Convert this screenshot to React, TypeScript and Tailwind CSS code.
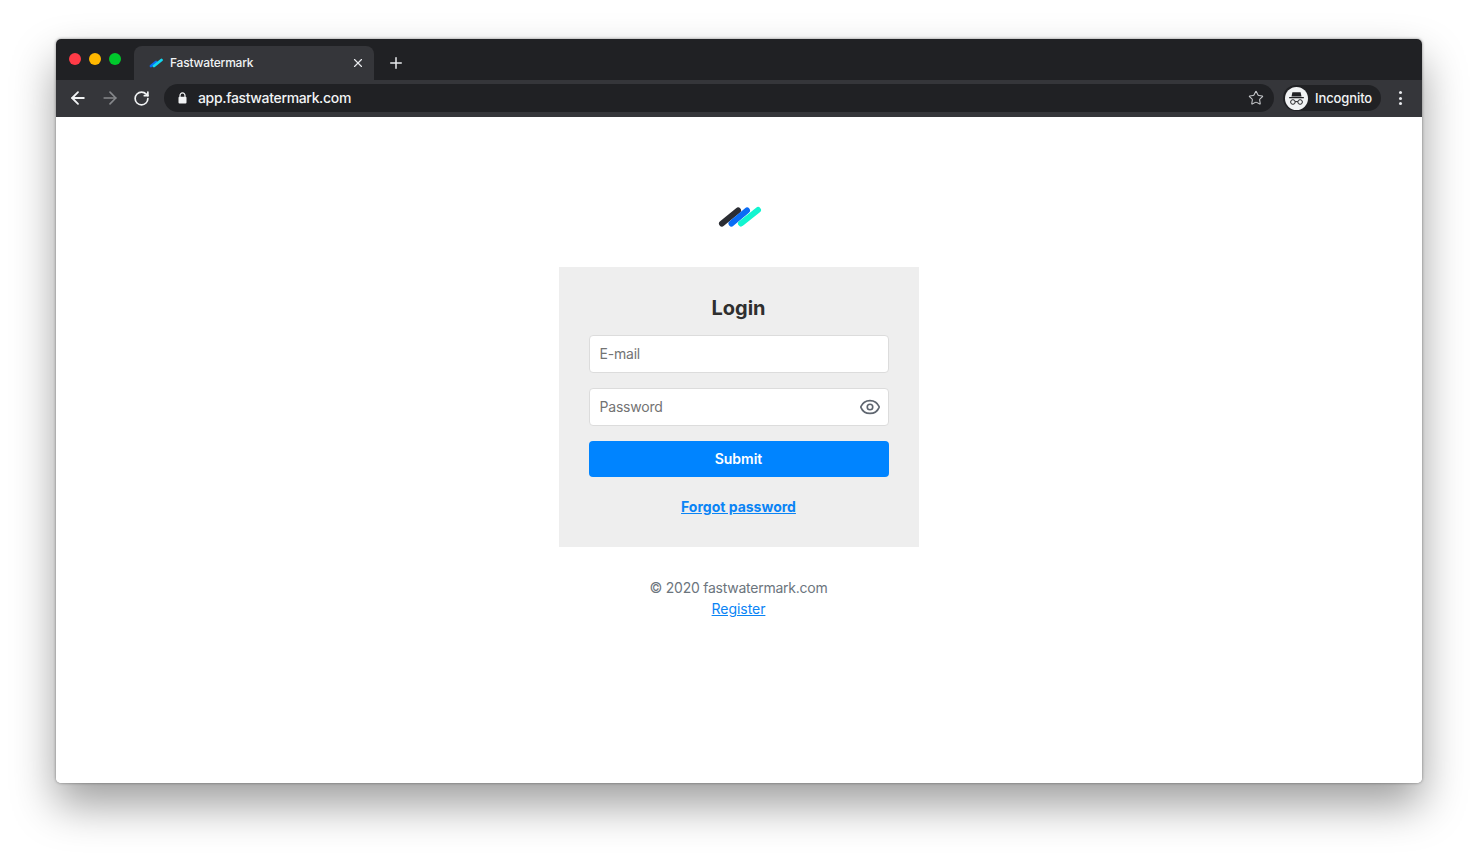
import { ArrowLeft, ArrowRight, Eye, Plus, RotateCw, Star, X } from 'lucide-react';

function Logo() {
  return (
    <svg width="44" height="22" viewBox="0 0 44 22" fill="none" strokeLinecap="round" strokeWidth="6" className="ml-[3px]">
      <path d="M4 17.5 L20 4.5" stroke="#2b2d33" />
      <path d="M13.5 17.5 L29 4.5" stroke="#0a6cf5" />
      <path d="M23 17.5 L40 4" stroke="#12f5d0" />
    </svg>
  );
}

function Favicon() {
  return (
    <svg width="14" height="10" viewBox="0 0 14 10" fill="none" strokeLinecap="round" strokeWidth="2.8">
      <path d="M2 8 L7 4" stroke="#0a6cf5" />
      <path d="M5 8 L12.5 2" stroke="#12d8f0" />
    </svg>
  );
}

function IncognitoBadge() {
  return (
    <div className="flex h-[23px] w-[23px] items-center justify-center rounded-full bg-[#f1f3f4]">
      <svg width="17" height="15" viewBox="0 0 17 15" fill="none">
        <path d="M4.4 1.2 H12.6 L13.5 5.4 H3.5 Z" fill="#202124" />
        <rect x="1" y="6" width="15" height="1.3" rx="0.65" fill="#202124" />
        <circle cx="4.9" cy="11" r="2.3" stroke="#202124" strokeWidth="1" />
        <circle cx="12.1" cy="11" r="2.3" stroke="#202124" strokeWidth="1" />
        <path d="M7.2 10.6 H9.8" stroke="#202124" strokeWidth="1" />
      </svg>
    </div>
  );
}

function TabStrip() {
  return (
    <div className="flex h-[41px] bg-[#202124]">
      <div className="flex w-[78px] items-start gap-2 pl-[13px] pt-[14px]">
        <span className="h-3 w-3 rounded-full bg-[#ff3b47]" />
        <span className="h-3 w-3 rounded-full bg-[#ffb800]" />
        <span className="h-3 w-3 rounded-full bg-[#00c92c]" />
      </div>
      <div className="mt-[7px] flex h-[34px] w-[240px] items-center rounded-t-lg bg-[#35363a] pl-[15px] pr-[9px]">
        <Favicon />
        <span className="ml-[7px] flex-1 text-[12px] font-medium tracking-[-0.2px] text-[#f1f3f4]">Fastwatermark</span>
        <X size={14} strokeWidth={2} className="text-[#e8eaed]" />
      </div>
      <div className="ml-[13px] mt-[15px]">
        <Plus size={18} strokeWidth={2} className="text-[#e8eaed]" />
      </div>
    </div>
  );
}

function Toolbar() {
  return (
    <div className="flex h-[37px] items-center bg-[#35363a] pb-[1px] pl-[12px]">
      <ArrowLeft size={20} strokeWidth={2.2} className="text-[#f1f3f4]" />
      <ArrowRight size={20} strokeWidth={2} className="ml-[12px] text-[#86888b]" />
      <RotateCw size={17} strokeWidth={2.4} className="ml-[13px] text-[#f1f3f4]" />
      <div className="ml-[14px] flex h-[28px] w-[1110px] items-center rounded-full bg-[#202124] pl-[14px] pr-[10px]">
        <svg width="9" height="12" viewBox="0 0 9 12" fill="none">
          <path d="M2 5 V3.4 a2.5 2.5 0 0 1 5 0 V5" stroke="#f1f3f4" strokeWidth="1.2" />
          <rect x="0.5" y="4.8" width="8" height="6.7" rx="1" fill="#f1f3f4" />
        </svg>
        <span className="ml-[11px] flex-1 pb-[1px] text-[14px] font-medium tracking-[-0.34px] text-[#f1f3f4]">app.fastwatermark.com</span>
        <Star size={16} strokeWidth={1.6} className="text-[#c4c6c9]" />
      </div>
      <div className="ml-[9px] flex h-[26px] w-[98px] items-center rounded-full bg-[#202124] pl-[2px]">
        <IncognitoBadge />
        <span className="ml-[7px] pt-[2px] text-[13px] font-medium tracking-[-0.1px] text-[#f1f3f4]">Incognito</span>
      </div>
      <div className="ml-[18px] flex flex-col gap-[2.5px]">
        <span className="h-[3px] w-[3px] rounded-full bg-[#e8eaed]" />
        <span className="h-[3px] w-[3px] rounded-full bg-[#e8eaed]" />
        <span className="h-[3px] w-[3px] rounded-full bg-[#e8eaed]" />
      </div>
    </div>
  );
}

function LoginCard() {
  return (
    <div className="flex h-[280px] w-[360px] flex-col bg-[#eeeeee] px-[30px] pt-[28px]">
      <h1 className="text-center text-[20px] leading-[26px] font-bold text-[#2f2f2f]">Login</h1>
      <input
        placeholder="E-mail"
        className="mt-[14px] h-[38px] w-full rounded border border-[#dcdcdc] bg-white px-[10px] pb-[2px] text-[14px] tracking-[-0.2px] outline-none placeholder:text-[#737373]"
      />
      <div className="relative mt-[15px]">
        <input
          placeholder="Password"
          className="h-[38px] w-full rounded border border-[#dcdcdc] bg-white px-[10px] pb-[2px] text-[14px] tracking-[-0.2px] outline-none placeholder:text-[#737373]"
        />
        <Eye size={22} strokeWidth={1.8} className="absolute right-[8px] top-[8px] text-[#5f6670]" />
      </div>
      <button className="mt-[15px] h-[36px] w-full rounded bg-[#0084ff] pb-[2px] text-[14px] font-semibold text-white">
        Submit
      </button>
      <a href="#" className="mt-[20px] text-center text-[14px] leading-[20px] font-bold text-[#0a84f5] underline">
        Forgot password
      </a>
    </div>
  );
}

export default function App() {
  return (
    <div className="h-[857px] w-[1478px] overflow-hidden bg-white px-[56px] pt-[39px] font-['Inter',sans-serif]">
      <div className="flex h-[744px] flex-col overflow-hidden rounded-[5px] bg-white shadow-[0_22px_44px_rgba(0,0,0,0.38),0_0_3px_rgba(0,0,0,0.45)]">
        <TabStrip />
        <Toolbar />
        <main className="flex flex-1 flex-col items-center bg-white pr-[1px] pt-[89px]">
          <Logo />
          <div className="mt-[39px]">
            <LoginCard />
          </div>
          <p className="mt-[30px] text-[14px] leading-[21px] tracking-[-0.25px] text-[#6c757d]">© 2020 fastwatermark.com</p>
          <a href="#" className="text-[14px] leading-[21px] tracking-[-0.05px] text-[#0a84f5] underline">
            Register
          </a>
        </main>
      </div>
    </div>
  );
}
